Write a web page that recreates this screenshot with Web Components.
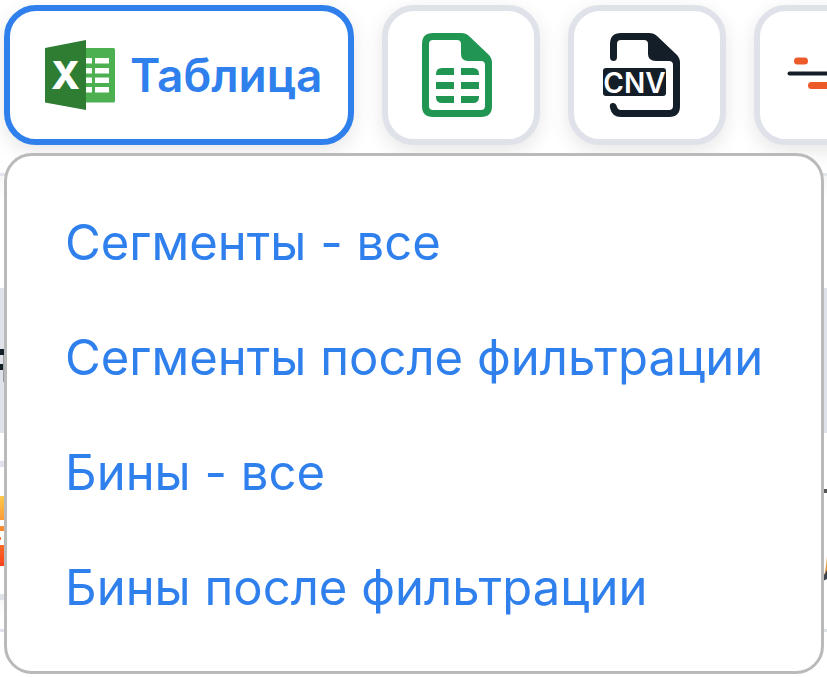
<!DOCTYPE html>
<html lang="ru">
<head>
<meta charset="utf-8">
<meta name="viewport" content="width=device-width, initial-scale=1">
<title>Таблица</title>
<style>
  html { height: 100%; }
  body {
    margin: 0;
    min-height: 100%;
    overflow: hidden;
    background: #fff;
    font-family: Inter, "Liberation Sans", sans-serif;
  }
</style>
</head>
<body>
<export-page></export-page>
<script>
const define = (name, html, setup) => customElements.define(name, class extends HTMLElement {
  constructor() {
    super();
    this.attachShadow({ mode: "open" }).innerHTML = html;
    if (setup) setup(this, this.shadowRoot);
  }
});

define("tool-button", `
<style>
  :host { display: block; flex: none; }
  button {
    box-sizing: border-box;
    display: flex;
    align-items: center;
    justify-content: center;
    gap: 15px;
    min-width: 158px;
    height: 140px;
    padding: 0 20px;
    border: 6px solid #dfe2e9;
    border-radius: 32px;
    background: #fff;
    color: #2f80ed;
    font: 600 46px/56px Inter, "Liberation Sans", sans-serif;
    box-shadow: 0 6px 20px rgba(0, 0, 0, .1);
    cursor: pointer;
  }
  :host([active]) button { padding: 0 20px 0 35px; border-color: #2f80ed; }
  :host([wide]) button { justify-content: flex-start; min-width: 350px; }
</style>
<button type="button"><slot></slot></button>`, (host, root) => {
  const label = host.getAttribute("label");
  if (label) root.querySelector("button").setAttribute("aria-label", label);
});

define("excel-icon", `
<style>:host { display: block; } svg { display: block; }</style>
<svg width="70" height="70" viewBox="0 0 70 70" aria-hidden="true">
  <rect x="30" y="8" width="40" height="54.500" rx="1.500" fill="#4caf50"/>
  <path d="M41 18h6v5.500h-6zM50 18h14v5.500H50zM41 28h6v5.500h-6zM50 28h14v5.500H50zM41 37.500h6V43h-6zM50 37.500h14V43H50zM41 47h6v5.500h-6zM50 47h14v5.500H50z" fill="#fff"/>
  <path d="M0 8 41 0v70L0 62.500z" fill="#2e7d32"/>
  <text x="20.500" y="49" text-anchor="middle" font-family="Inter, sans-serif" font-size="38" font-weight="800" fill="#fff">X</text>
</svg>`);

define("sheet-icon", `
<style>:host { display: block; } svg { display: block; }</style>
<svg width="78" height="84" viewBox="0 0 78 84" aria-hidden="true" fill="#219653">
  <path fill-rule="evenodd" d="M11 0H39Q44 0 47 3L67 22Q70 25 70 30V73Q70 84 59 84H11Q0 84 0 73V11Q0 0 11 0zM11 7Q7 7 7 11V73Q7 77 11 77H59Q63 77 63 73V32Q63 28 59 28H46Q39 28 39 21V11Q39 7 35 7z"/>
  <path d="M20 35h12v7H14v-1q0-6 6-6zM39 35h12q6 0 6 6v1H39zM14 49h18v7H14zM39 49h18v7H39zM14 63h18v7H20q-6 0-6-6zM39 63h18v1q0 6-6 6H39z"/>
</svg>`);

define("cnv-icon", `
<style>:host { display: block; } svg { display: block; }</style>
<svg width="88" height="84" viewBox="0 0 88 84" aria-hidden="true" fill="#141e28">
  <path d="M7 24V11Q7 0 18 0H46Q51 0 54 3L74 22Q77 25 77 30V73Q77 84 66 84H18Q9 84 7 75Q6 70 10 70Q13 70 14 74Q15 77 18 77H66Q70 77 70 73V32Q70 28 66 28H53Q45 28 45 21V11Q45 7 41 7H18Q14 7 14 11V24Q14 28 10.500 28Q7 28 7 24z"/>
  <rect x="0" y="35" width="63" height="28" rx="3"/>
  <text x="31.500" y="59.500" text-anchor="middle" font-family="Inter, sans-serif" font-size="28" font-weight="600" fill="#fff">CNV</text>
</svg>`);

define("segments-icon", `
<style>:host { display: block; } svg { display: block; }</style>
<svg width="92" height="84" viewBox="0 0 92 84" aria-hidden="true" stroke-linecap="round" fill="none">
  <path d="M10.500 28h7M24.500 52.500H42M52 28h22" stroke="#eb5a28" stroke-width="7"/>
  <path d="M2.500 40.500h87" stroke="#141e28" stroke-width="4"/>
</svg>`);

define("tool-bar", `
<style>
  :host {
    display: flex;
    gap: 28px;
    padding: 5px 4px 28px;
    overflow: hidden;
  }
</style>
<slot></slot>`);

define("menu-link", `
<style>
  :host { display: block; }
  a {
    display: block;
    padding: 27px 58px;
    color: #2f80ed;
    font-size: 49px;
    line-height: 61px;
    white-space: nowrap;
    text-decoration: none;
  }
</style>
<a href="#"><slot></slot></a>`);

define("drop-menu", `
<style>
  :host {
    box-sizing: border-box;
    display: block;
    padding: 29px 0 26px;
    border: 3px solid #bababa;
    border-radius: 28px;
    background: #fff;
  }
</style>
<slot></slot>`);

define("results-table", `
<style>
  :host { display: block; border-top: 3px solid #e3e6ed; }
  .filters { height: 112px; background: linear-gradient(#f7f7f7, #fff 24px); }
  .band { height: 145px; background: #dfe2e9; }
  .row {
    display: flex;
    align-items: flex-start;
    justify-content: space-between;
    box-sizing: border-box;
    height: 196px;
    padding-top: 28px;
  }
  .foot { height: 45px; border-top: 3px solid #dfe2e9; }
  .card {
    box-sizing: border-box;
    width: 5px;
    height: 139px;
    padding-top: 29px;
    border: solid #dfe2e9;
    border-width: 6px 0;
    box-shadow: 0 6px 20px rgba(0, 0, 0, .2);
  }
  svg { display: block; }
  .band svg { padding-top: 60px; }
  .row > svg { padding-top: 28px; }
</style>
<div class="filters"></div>
<div class="band">
  <svg width="5" height="36" aria-hidden="true"><path d="M0 1h5v6H0zM0 16h5v6H0z" fill="#141e28"/><path d="M3 7h2v27H3z" fill="#9a9da3"/></svg>
</div>
<div class="row">
  <div class="card">
    <svg width="5" height="70" aria-hidden="true">
      <defs><linearGradient id="heat" x1="0" y1="0" x2="0" y2="1"><stop offset="0" stop-color="#fdc94a"/><stop offset=".5" stop-color="#fc8630"/><stop offset="1" stop-color="#f9421c"/></linearGradient></defs>
      <path d="M0 0h5v24H0zM0 30h5v5H0zM0 41h1v3H0zM0 49h5v21H0z" fill="url(#heat)"/>
    </svg>
  </div>
  <svg width="4" height="94" aria-hidden="true">
    <path d="M0 0h4v4H0z" fill="#555"/>
    <path d="M4 67Q3 79 1 87h3z" fill="#ec9a45"/>
    <path d="M4 81 0 88v4l4-2z" fill="#3c4450"/>
  </svg>
</div>
<div class="foot"></div>`);

define("export-page", `
<style>
  :host { display: block; position: relative; }
  drop-menu { position: absolute; top: 153px; left: 4px; right: 3px; }
</style>
<tool-bar>
  <tool-button active wide><excel-icon></excel-icon>Таблица</tool-button>
  <tool-button label="Google Таблицы"><sheet-icon></sheet-icon></tool-button>
  <tool-button label="CNV"><cnv-icon></cnv-icon></tool-button>
  <tool-button label="Сегменты"><segments-icon></segments-icon></tool-button>
</tool-bar>
<results-table></results-table>
<drop-menu>
  <menu-link>Сегменты - все</menu-link>
  <menu-link>Сегменты после фильтрации</menu-link>
  <menu-link>Бины - все</menu-link>
  <menu-link>Бины после фильтрации</menu-link>
</drop-menu>`);
</script>
</body>
</html>
